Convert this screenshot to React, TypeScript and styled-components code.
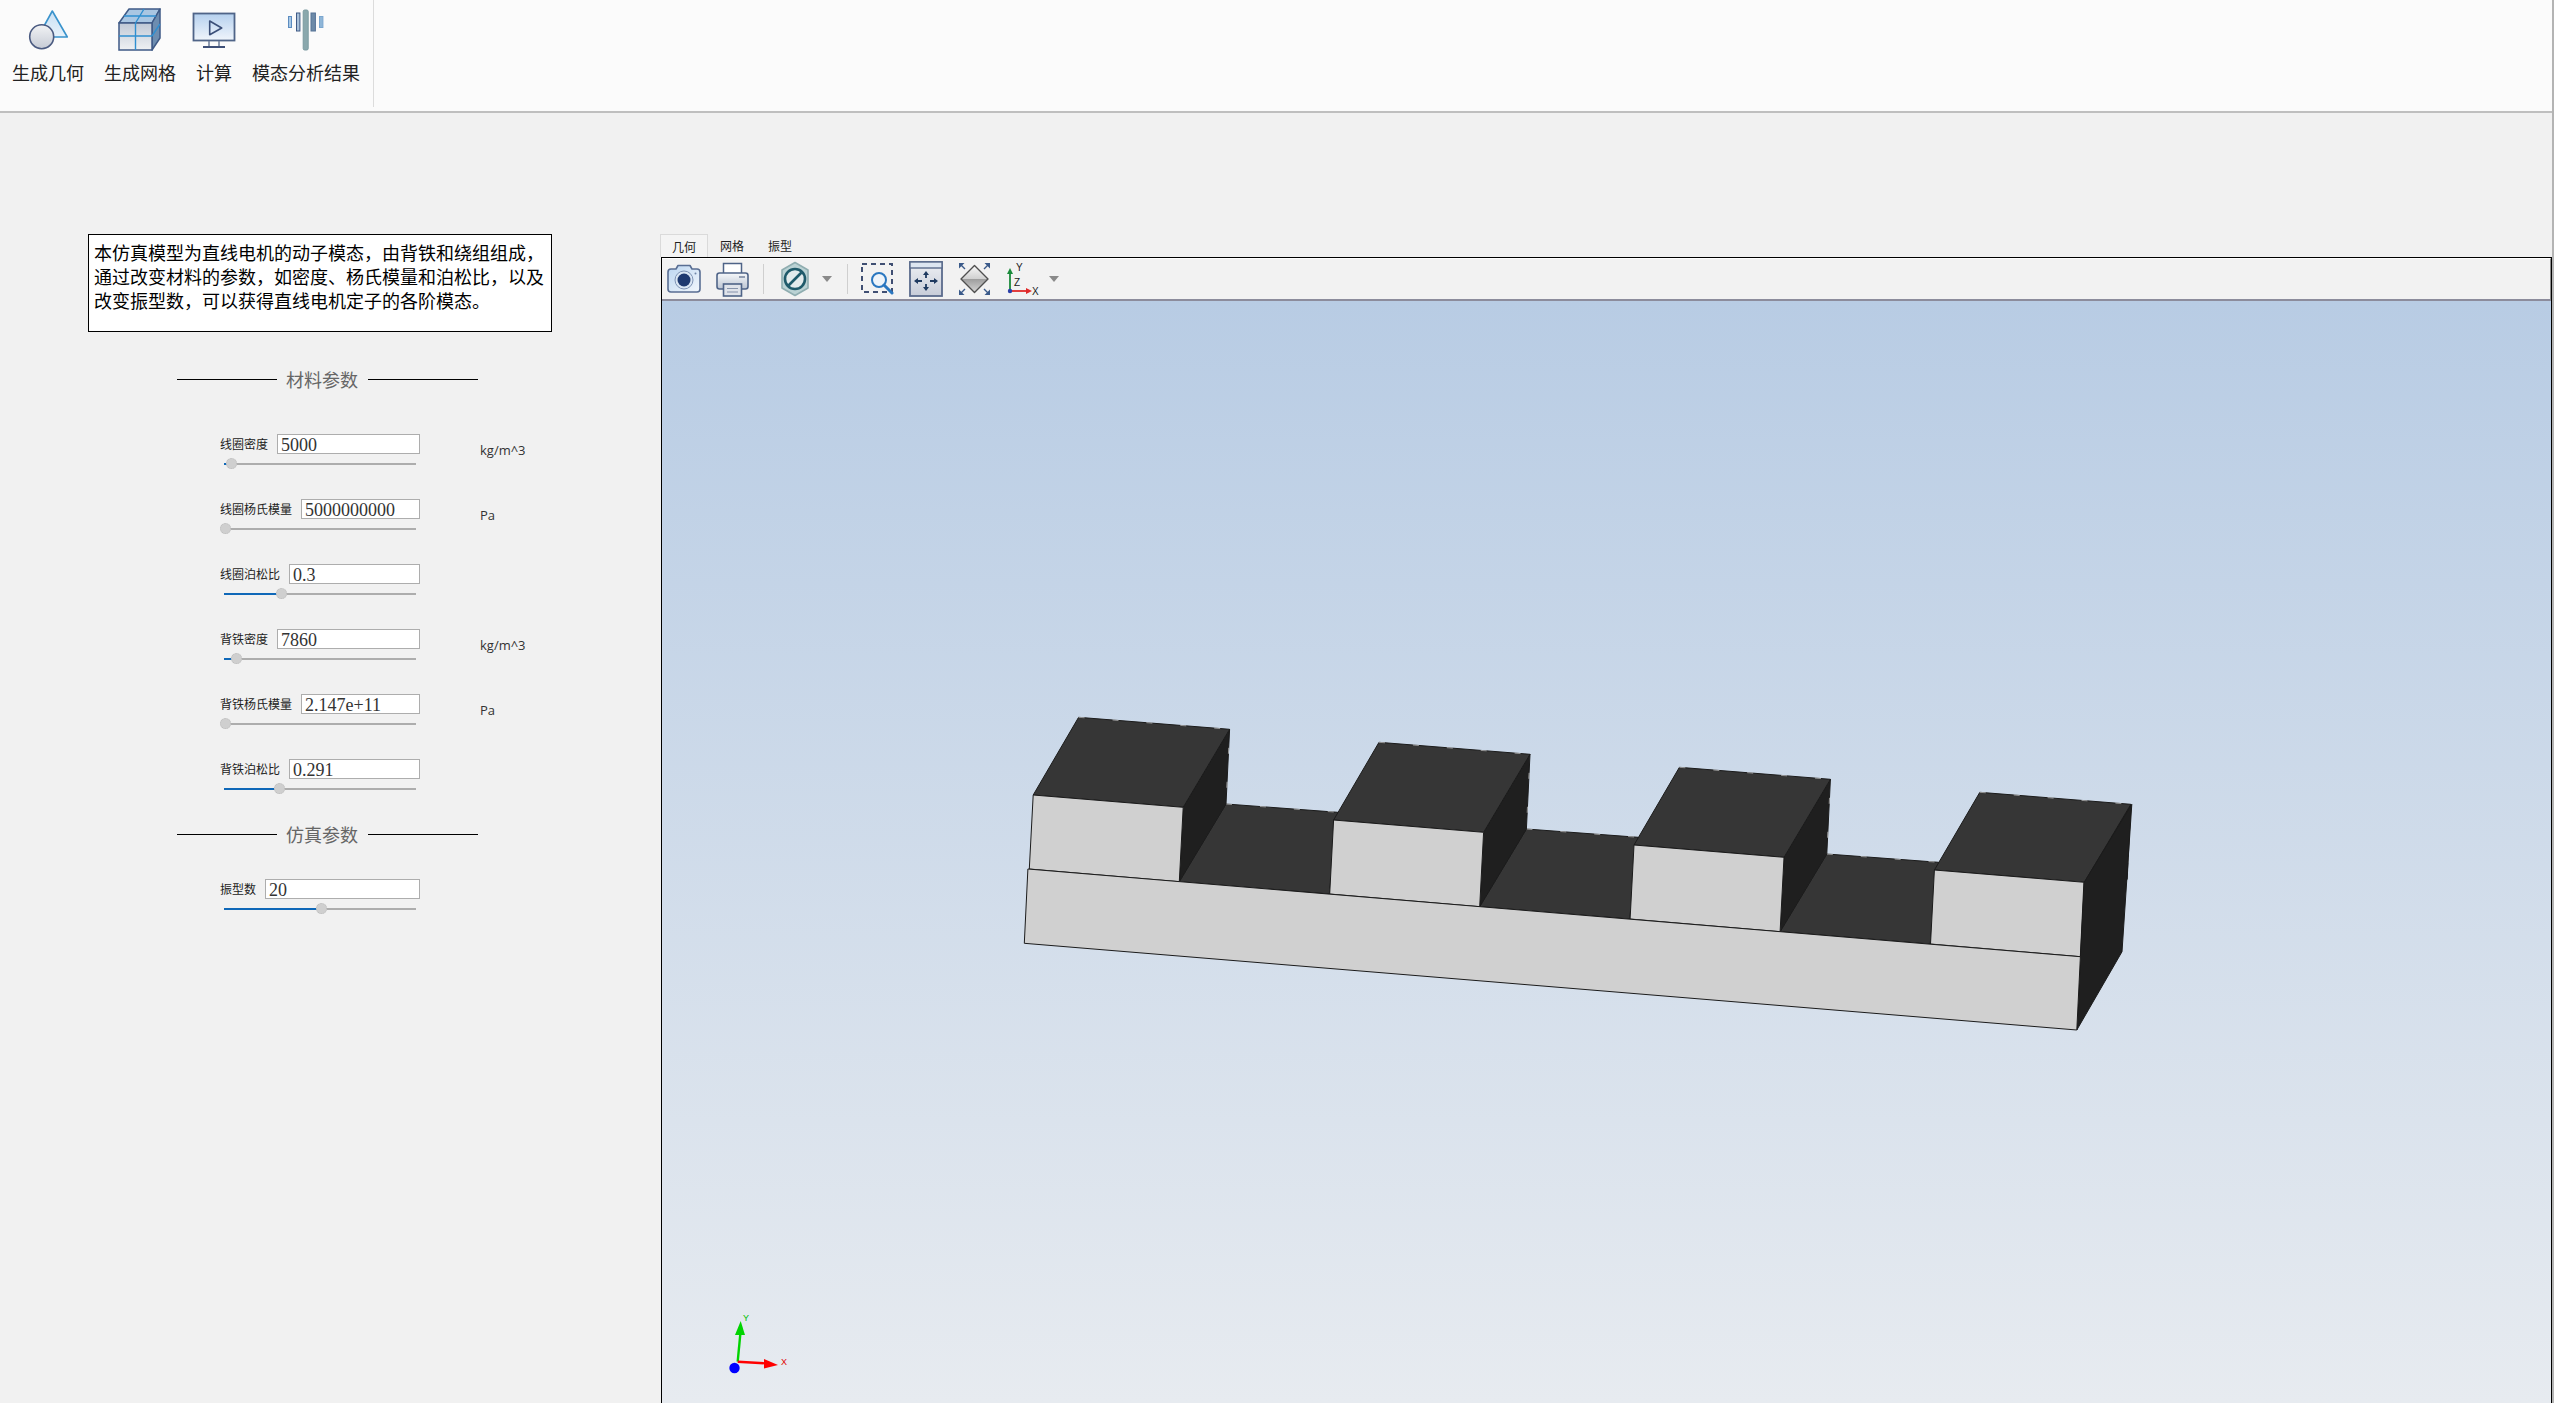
import styled, { createGlobalStyle } from 'styled-components';

const GlobalStyle = createGlobalStyle`
  html, body {
    margin: 0;
    padding: 0;
    background: #f1f1f1;
  }
  * {
    box-sizing: border-box;
  }
`;

const CJK = `"Noto Sans CJK SC", "Noto Sans", sans-serif`;

const Page = styled.div`
  width: 2554px;
  height: 1403px;
  overflow: hidden;
  display: flex;
  flex-direction: column;
  background: #f1f1f1;
  font-family: ${CJK};
  border-right: 2px solid #b4b4b4;
`;

const Ribbon = styled.div`
  height: 113px;
  flex: none;
  background: #fbfbfb;
  border-bottom: 2px solid #bfbfbf;
  display: flex;
  align-items: flex-start;
`;

const RibbonGroup = styled.div`
  height: 107px;
  display: flex;
  gap: 20px;
  padding: 0 13px 0 12px;
  border-right: 1px solid #dcdcdc;
`;

const RibbonButton = styled.div`
  display: flex;
  flex-direction: column;
  align-items: center;
  color: #222;
  font-size: 18px;
  line-height: 24px;
  white-space: nowrap;
`;

const RibbonIcon = styled.svg`
  width: 60px;
  height: 60px;
  flex: none;
  margin: 0 -12px;
`;

const Main = styled.div`
  flex: 1;
  min-height: 0;
  display: flex;
`;

const LeftPanel = styled.div`
  width: 661px;
  flex: none;
  padding: 121px 0 0 88px;
`;

const Description = styled.div`
  width: 464px;
  height: 98px;
  padding: 5px 4px 0 5px;
  border: 1px solid #000;
  background: #fff;
  color: #000;
  font-size: 18px;
  line-height: 24px;
`;

const SectionTitle = styled.div<{ $before: number; $after: number }>`
  display: flex;
  align-items: center;
  height: 22px;
  margin: ${(p) => p.$before}px 0 ${(p) => p.$after}px 89px;
  color: #666;
  font-size: 18px;
`;

const SectionRule = styled.span<{ $width: number }>`
  width: ${(p) => p.$width}px;
  height: 1px;
  background: #000;
`;

const SectionText = styled.span`
  margin: 0 10px 0 9px;
`;

const ParamRow = styled.div`
  display: grid;
  grid-template-columns: 200px 60px auto;
  height: 65px;
  margin-left: 132px;
`;

const FieldBlock = styled.div`
  display: flex;
  flex-direction: column;
  gap: 4px;
`;

const FieldLine = styled.div`
  display: flex;
  align-items: center;
  gap: 9px;
  height: 20px;
`;

const FieldLabel = styled.label`
  flex: none;
  color: #222;
  font-size: 12px;
  line-height: 20px;
`;

const FieldInput = styled.input`
  flex: 1;
  min-width: 0;
  height: 20px;
  padding: 2px 3px 0;
  border: 1px solid #adadad;
  border-radius: 0;
  outline: none;
  background: #fff;
  color: #333;
  font-family: "Liberation Serif", serif;
  font-size: 18px;
`;

const SliderTrack = styled.div`
  position: relative;
  width: 192px;
  height: 12px;
  margin-left: 4px;

  &::before {
    content: '';
    position: absolute;
    left: 0;
    right: 0;
    top: 5px;
    height: 2px;
    background: #adadad;
  }
`;

const SliderFill = styled.div<{ $pos: number }>`
  position: absolute;
  left: 0;
  top: 5px;
  width: ${(p) => p.$pos}px;
  height: 2px;
  background: #0f68b8;
`;

const SliderThumb = styled.div<{ $pos: number }>`
  position: absolute;
  left: ${(p) => p.$pos - 5.5}px;
  top: 0;
  width: 11px;
  height: 11px;
  border-radius: 50%;
  background: #cfcfcf;
  border: 1px dotted #bcbcbc;
`;

const Unit = styled.div`
  grid-column: 3;
  margin-top: 6px;
  color: #333;
  font-family: "Open Sans", sans-serif;
  font-size: 13px;
  line-height: 20px;
`;

const RightPanel = styled.div`
  flex: 1;
  min-width: 0;
  display: flex;
  flex-direction: column;
  padding: 121px 0 0 0;
`;

const TabBar = styled.div`
  display: flex;
  height: 23px;
  flex: none;
  margin-left: -1px;
`;

const Tab = styled.div<{ $active?: boolean }>`
  width: 48px;
  height: 23px;
  text-align: center;
  color: #222;
  font-size: 12px;
  line-height: 23px;
  background: ${(p) => (p.$active ? '#f4f4f4' : 'transparent')};
  border: ${(p) => (p.$active ? '1px solid #dadada' : 'none')};
  border-bottom: none;
`;

const ViewFrame = styled.div`
  flex: 1;
  min-height: 0;
  width: 1891px;
  display: flex;
  flex-direction: column;
  border-top: 1px solid #000;
  border-left: 1px solid #000;
  border-right: 1px solid #000;
`;

const ViewToolbar = styled.div`
  height: 43px;
  flex: none;
  display: flex;
  align-items: center;
  background: #f2f2f2;
  border-top: 1px solid #fff;
  border-right: 1px solid #8c8c8c;
  border-bottom: 2px solid #8c8c9c;
`;

const ToolIcon = styled.svg<{ $ml: number; $w: number }>`
  flex: none;
  margin-left: ${(p) => p.$ml}px;
  width: ${(p) => p.$w}px;
  height: 36px;
`;

const ToolSeparator = styled.div<{ $ml: number }>`
  flex: none;
  margin-left: ${(p) => p.$ml}px;
  width: 1px;
  height: 30px;
  background: #cfcfcf;
`;

const Viewport = styled.div`
  flex: 1;
  min-height: 0;
  background: linear-gradient(180deg, #b8cce4 0%, #e7ebf0 100%);
`;

const Scene = styled.svg`
  display: block;
  width: 100%;
  height: 100%;
`;

const RibbonItems = [
  { label: '生成几何', icon: <GeometryIcon /> },
  { label: '生成网格', icon: <MeshIcon /> },
  { label: '计算', icon: <SolveIcon /> },
  { label: '模态分析结果', icon: <ResultIcon /> },
];

const MaterialParams = [
  { label: '线圈密度', value: '5000', thumb: 7, unit: 'kg/m^3' },
  { label: '线圈杨氏模量', value: '5000000000', thumb: 1, unit: 'Pa' },
  { label: '线圈泊松比', value: '0.3', thumb: 57 },
  { label: '背铁密度', value: '7860', thumb: 12, unit: 'kg/m^3' },
  { label: '背铁杨氏模量', value: '2.147e+11', thumb: 1, unit: 'Pa' },
  { label: '背铁泊松比', value: '0.291', thumb: 55 },
];

function GeometryIcon() {
  return (
    <RibbonIcon viewBox="0 0 60 60">
      <defs>
        <linearGradient id="triFill" x1="0" y1="0" x2="0" y2="1">
          <stop offset="0" stopColor="#c9e0f4" />
          <stop offset="1" stopColor="#e8f2fa" />
        </linearGradient>
        <linearGradient id="discFill" x1="0" y1="0" x2="0" y2="1">
          <stop offset="0" stopColor="#f2f3f5" />
          <stop offset="1" stopColor="#c6cbd5" />
        </linearGradient>
      </defs>
      <path d="M34.3 11 L49.3 37 L20 37 Z" fill="url(#triFill)" stroke="#3a93cc" strokeWidth="1.6" strokeLinejoin="round" />
      <circle cx="23.7" cy="36.7" r="12" fill="url(#discFill)" stroke="#4a5a80" strokeWidth="1.6" />
    </RibbonIcon>
  );
}

function MeshIcon() {
  return (
    <RibbonIcon viewBox="0 0 60 60">
      <defs>
        <linearGradient id="meshFront" x1="0" y1="0" x2="0" y2="1">
          <stop offset="0" stopColor="#bfc8d6" />
          <stop offset="1" stopColor="#eff1f3" />
        </linearGradient>
      </defs>
      <path d="M9 23 L19 9 L50 9 L42 23 Z" fill="#a9c6e2" stroke="#3f5a86" strokeWidth="1.5" strokeLinejoin="round" />
      <path d="M42 23 L50 9 L50 38 L42 50 Z" fill="#6d8db0" stroke="#3f5a86" strokeWidth="1.5" strokeLinejoin="round" />
      <rect x="9" y="23" width="33" height="27" fill="url(#meshFront)" stroke="#3f5a86" strokeWidth="1.5" />
      <path d="M25.5 23 V50 M9 36 H42 M25.5 23 L34 9 M14 16 H46 M42 36 L50 24" fill="none" stroke="#2f8fd0" strokeWidth="1.4" />
    </RibbonIcon>
  );
}

function SolveIcon() {
  return (
    <RibbonIcon viewBox="0 0 60 60">
      <defs>
        <linearGradient id="screenFill" x1="0" y1="0" x2="0" y2="1">
          <stop offset="0" stopColor="#b5d0ee" />
          <stop offset="1" stopColor="#f0f5fb" />
        </linearGradient>
      </defs>
      <rect x="9.5" y="13.5" width="41" height="27" fill="url(#screenFill)" stroke="#4f6488" strokeWidth="1.8" />
      <path d="M25.7 21 L37.7 28 L25.7 34.7 Z" fill="none" stroke="#3b4f78" strokeWidth="1.6" strokeLinejoin="round" />
      <path d="M25 41 V46 M35 41 V46" stroke="#6d7d99" strokeWidth="1.5" />
      <path d="M19 47 H41" stroke="#3f5078" strokeWidth="2" />
    </RibbonIcon>
  );
}

function ResultIcon() {
  return (
    <RibbonIcon viewBox="0 0 60 60">
      <rect x="12.5" y="16.5" width="3" height="11" fill="#a9c9e6" stroke="#5c8cc0" />
      <rect x="20.5" y="13" width="3.4" height="18" fill="#a9c0d8" stroke="#3f5a86" />
      <rect x="27.2" y="10" width="5" height="40" rx="1.5" fill="#8aa8ad" stroke="#7a9aa0" />
      <rect x="35" y="13" width="4.4" height="18" fill="#6d8aa8" stroke="#557296" />
      <rect x="43.5" y="16.5" width="3.4" height="11" fill="#8fb6d8" stroke="#7aa6cf" />
    </RibbonIcon>
  );
}

function CameraIcon() {
  return (
    <ToolIcon $ml={5} $w={34} viewBox="0 0 34 36">
      <defs>
        <linearGradient id="camFill" x1="0" y1="0" x2="1" y2="1">
          <stop offset="0" stopColor="#bcd6f1" />
          <stop offset="1" stopColor="#f2f7fc" />
        </linearGradient>
      </defs>
      <path d="M1 11 Q1 8 4 8 H9 L11 4.5 H23 L25 8 H30 Q33 8 33 11 V28 Q33 31 30 31 H4 Q1 31 1 28 Z" fill="url(#camFill)" stroke="#596e93" strokeWidth="1.6" strokeLinejoin="round" />
      <circle cx="17" cy="19" r="9" fill="#dbe7f4" stroke="#7f94b5" strokeWidth="1" />
      <circle cx="17" cy="19" r="6.5" fill="#1f3a70" />
      <circle cx="28.5" cy="12.5" r="1" fill="#6f86a8" />
    </ToolIcon>
  );
}

function PrinterIcon() {
  return (
    <ToolIcon $ml={15} $w={33} viewBox="0 0 33 36">
      <defs>
        <linearGradient id="printFill" x1="0" y1="0" x2="0" y2="1">
          <stop offset="0" stopColor="#f6f8fa" />
          <stop offset="1" stopColor="#bcc5d2" />
        </linearGradient>
      </defs>
      <rect x="7.5" y="2.5" width="18" height="11" fill="#fff" stroke="#4f6488" strokeWidth="1.5" />
      <rect x="1" y="12" width="31" height="16" rx="2.5" fill="url(#printFill)" stroke="#4f6488" strokeWidth="1.6" />
      <path d="M23 16 H29" stroke="#7b8aa3" strokeWidth="1.6" />
      <rect x="7.5" y="23" width="18" height="12" fill="#dfe3ea" stroke="#4f6488" strokeWidth="1.6" />
      <path d="M11 27.5 H22 M11 31 H22" stroke="#8794ab" strokeWidth="1.2" />
    </ToolIcon>
  );
}

function ClipIcon() {
  return (
    <ToolIcon $ml={17} $w={28} viewBox="0 0 28 36">
      <path d="M14 1.5 L27 9 V27 L14 34.5 L1 27 V9 Z" fill="#bad2d4" stroke="#8fadb0" strokeWidth="1.6" strokeLinejoin="round" />
      <circle cx="14" cy="18" r="10" fill="#e3ebec" stroke="#1f5a6a" strokeWidth="2.6" />
      <path d="M7.5 24.5 L20.5 11.5" stroke="#1f5a6a" strokeWidth="2.6" />
    </ToolIcon>
  );
}

function DropCaret({ ml }: { ml: number }) {
  return (
    <ToolIcon $ml={ml} $w={10} viewBox="0 0 10 36">
      <path d="M0 15 H10 L5 21 Z" fill="#8a8a8a" />
    </ToolIcon>
  );
}

function ZoomBoxIcon() {
  return (
    <ToolIcon $ml={13} $w={33} viewBox="0 0 33 36">
      <rect x="1" y="3" width="30" height="28" fill="none" stroke="#3f4f73" strokeWidth="2" strokeDasharray="5 4" />
      <circle cx="18" cy="19" r="7" fill="#eef4fa" stroke="#2a77c0" strokeWidth="2" />
      <path d="M23 24 L31 32" stroke="#2a77c0" strokeWidth="3" strokeLinecap="round" />
    </ToolIcon>
  );
}

function FitIcon() {
  return (
    <ToolIcon $ml={15} $w={34} viewBox="0 0 34 36">
      <defs>
        <linearGradient id="fitFill" x1="0" y1="0" x2="0" y2="1">
          <stop offset="0" stopColor="#eef0f4" />
          <stop offset="1" stopColor="#c7ccd8" />
        </linearGradient>
      </defs>
      <rect x="1" y="1" width="32" height="34" fill="url(#fitFill)" stroke="#5a6b8c" strokeWidth="1.8" />
      <rect x="1" y="1" width="32" height="6" fill="#dde6f1" stroke="#5a6b8c" strokeWidth="1.4" />
      <path d="M17 12 V17 M17 23 V28 M7 20 H13 M21 20 H27" stroke="#1f3a60" strokeWidth="1.8" />
      <path d="M17 10 L14 14 H20 Z M17 30 L14 26 H20 Z M5 20 L9 17 V23 Z M29 20 L25 17 V23 Z" fill="#1f3a60" />
    </ToolIcon>
  );
}

function DiamondIcon() {
  return (
    <ToolIcon $ml={15} $w={33} viewBox="0 0 33 36">
      <defs>
        <linearGradient id="diaFill" x1="0" y1="0" x2="0" y2="1">
          <stop offset="0" stopColor="#f8f8f8" />
          <stop offset="0.5" stopColor="#d0d0d0" />
          <stop offset="0.5" stopColor="#9d9d9d" />
          <stop offset="1" stopColor="#d5d5d5" />
        </linearGradient>
      </defs>
      <path d="M16.5 4.5 L30 18 L16.5 31.5 L3 18 Z" fill="url(#diaFill)" stroke="#4f4f4f" strokeWidth="1.4" strokeLinejoin="round" />
      <path d="M1 2 L6.5 2 L1 7.5 Z M32 2 L26.5 2 L32 7.5 Z M1 34 L6.5 34 L1 28.5 Z M32 34 L26.5 34 L32 28.5 Z" fill="#3a5a8a" />
      <path d="M3 4 L7 8 M30 4 L26 8 M3 32 L7 28 M30 32 L26 28" stroke="#3a5a8a" strokeWidth="1.4" />
    </ToolIcon>
  );
}

function AxisIcon() {
  return (
    <ToolIcon $ml={14} $w={35} viewBox="0 0 35 36">
      <path d="M5 30 V10" stroke="#1a8a3a" strokeWidth="1.8" />
      <path d="M5 7 L2 13 H8 Z" fill="#1a8a3a" />
      <path d="M5 30 H23" stroke="#e02a2a" strokeWidth="1.8" />
      <path d="M27 30 L21 27 V33 Z" fill="#e02a2a" />
      <circle cx="5" cy="30" r="2.2" fill="#2a3fa8" />
      <text x="11" y="10" fontFamily="Liberation Sans, sans-serif" fontSize="10" fill="#222">Y</text>
      <text x="9" y="25" fontFamily="Liberation Sans, sans-serif" fontSize="10" fill="#222">Z</text>
      <text x="27" y="34" fontFamily="Liberation Sans, sans-serif" fontSize="10" fill="#222">X</text>
    </ToolIcon>
  );
}

type Pt = [number, number];

const pts = (list: Pt[], dx = 0, dy = 0) =>
  list.map(([x, y]) => `${x + dx},${y + dy}`).join(' ');

// one coil of the model, coordinates taken from the leftmost tooth
const COIL_TOP: Pt[] = [[1078.6, 717.3], [1229.6, 729.3], [1183.2, 807.3], [1033.2, 795]];
const COIL_FRONT: Pt[] = [[1033.2, 795], [1183.2, 807.3], [1179.3, 881.7], [1029.3, 869]];
const COIL_SIDE: Pt[] = [[1229.6, 729.3], [1226, 804], [1179.3, 881.7], [1183.2, 807.3]];
const SLOT_TOP: Pt[] = [[1226, 804], [1337.9, 812.3], [1329.3, 894], [1179.3, 881.7]];
const SLOT_BACK: Pt[] = [[1226, 804], [1337.9, 812.3]];
const COIL_BACK: Pt[] = [[1078.6, 717.3], [1229.6, 729.3], [1226, 804]];
const PITCH: Pt = [300.4, 25];

const EDGE = '#1b1b1b';
const GLINT = '#e8e8e8';

function Model() {
  return (
    <g strokeLinejoin="round">
      {[0, 1, 2].map((i) => (
        <g key={`slot${i}`}>
          <polygon points={pts(SLOT_TOP, PITCH[0] * i, PITCH[1] * i)} fill="#363636" stroke={EDGE} />
          <polyline points={pts(SLOT_BACK, PITCH[0] * i, PITCH[1] * i)} fill="none" stroke={GLINT} strokeWidth="0.6" strokeDasharray="6 28" />
        </g>
      ))}
      {[0, 1, 2, 3].map((i) => {
        const dx = PITCH[0] * i;
        const dy = PITCH[1] * i;
        return (
          <g key={`coil${i}`}>
            <polygon points={pts(COIL_SIDE, dx, dy)} fill="#1f1f1f" stroke={EDGE} />
            <polygon points={pts(COIL_TOP, dx, dy)} fill="#363636" stroke={EDGE} />
            <polygon points={pts(COIL_FRONT, dx, dy)} fill="#d0d0d0" stroke={EDGE} />
            <polyline points={pts(COIL_BACK, dx, dy)} fill="none" stroke={GLINT} strokeWidth="0.6" strokeDasharray="6 28" />
          </g>
        );
      })}
      <polygon points="2131.8,804.3 2122,951.7 2076.8,1030 2083.9,882.7" fill="#1f1f1f" stroke={EDGE} />
      <polygon points="1027.9,869 2080.4,956.7 2076.8,1030 1024.3,943.3" fill="#d0d0d0" stroke={EDGE} />
    </g>
  );
}

function Triad() {
  return (
    <g>
      <path d="M737.7 1361.7 L740.5 1332" stroke="#00d400" strokeWidth="2.4" />
      <path d="M740.7 1321 L745 1335 H735 Z" fill="#00d400" />
      <path d="M737.7 1361.7 L766 1363.4" stroke="#ff0000" strokeWidth="2.4" />
      <path d="M778 1365 L764 1359 V1368.5 Z" fill="#ff0000" />
      <circle cx="734.5" cy="1368" r="5.2" fill="#0000ff" />
      <text x="743" y="1321" fontFamily="Liberation Sans, sans-serif" fontSize="9" fill="#00c000">Y</text>
      <text x="781" y="1365" fontFamily="Liberation Sans, sans-serif" fontSize="9" fill="#e00000">X</text>
    </g>
  );
}

function Param({ label, value, thumb, unit }: { label: string; value: string; thumb: number; unit?: string }) {
  return (
    <ParamRow>
      <FieldBlock>
        <FieldLine>
          <FieldLabel>{label}</FieldLabel>
          <FieldInput readOnly defaultValue={value} />
        </FieldLine>
        <SliderTrack>
          <SliderFill $pos={thumb} />
          <SliderThumb $pos={thumb} />
        </SliderTrack>
      </FieldBlock>
      {unit && <Unit>{unit}</Unit>}
    </ParamRow>
  );
}

export default function App() {
  return (
    <>
      <GlobalStyle />
      <Page>
        <Ribbon>
          <RibbonGroup>
            {RibbonItems.map((item) => (
              <RibbonButton key={item.label}>
                {item.icon}
                {item.label}
              </RibbonButton>
            ))}
          </RibbonGroup>
        </Ribbon>
        <Main>
          <LeftPanel>
            <Description>
              本仿真模型为直线电机的动子模态，由背铁和绕组组成，通过改变材料的参数，如密度、杨氏模量和泊松比，以及改变振型数，可以获得直线电机定子的各阶模态。
            </Description>
            <SectionTitle $before={36} $after={44}>
              <SectionRule $width={100} />
              <SectionText>材料参数</SectionText>
              <SectionRule $width={110} />
            </SectionTitle>
            {MaterialParams.map((p) => (
              <Param key={p.label} {...p} />
            ))}
            <SectionTitle $before={-1} $after={34}>
              <SectionRule $width={100} />
              <SectionText>仿真参数</SectionText>
              <SectionRule $width={110} />
            </SectionTitle>
            <Param label="振型数" value="20" thumb={97} />
          </LeftPanel>
          <RightPanel>
            <TabBar>
              <Tab $active>几何</Tab>
              <Tab>网格</Tab>
              <Tab>振型</Tab>
            </TabBar>
            <ViewFrame>
              <ViewToolbar>
                <CameraIcon />
                <PrinterIcon />
                <ToolSeparator $ml={14} />
                <ClipIcon />
                <DropCaret ml={13} />
                <ToolSeparator $ml={15} />
                <ZoomBoxIcon />
                <FitIcon />
                <DiamondIcon />
                <AxisIcon />
                <DropCaret ml={9} />
              </ViewToolbar>
              <Viewport>
                <Scene viewBox="662 301 1889 1102" preserveAspectRatio="xMinYMin slice">
                  <Model />
                  <Triad />
                </Scene>
              </Viewport>
            </ViewFrame>
          </RightPanel>
        </Main>
      </Page>
    </>
  );
}
